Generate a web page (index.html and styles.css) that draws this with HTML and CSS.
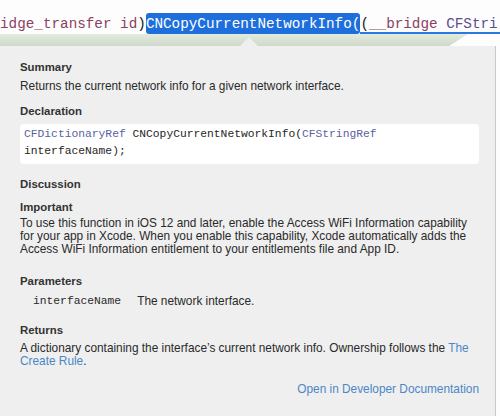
FILE: index.html
```html
<!DOCTYPE html>
<html>
<head>
<meta charset="utf-8">
<link rel="stylesheet" href="styles.css">
</head>
<body>
<div class="editor">
  <div class="codeline"><span class="kw">idge_transfer id</span><span class="pl">)</span><span class="sel">CNCopyCurrentNetworkInfo(</span><span class="rest"><span class="pl">(</span><span class="kw">__bridge</span> <span class="ty">CFStri</span></span></div>
  <div class="band"></div>
  <div class="popover">
    <svg class="arrow" width="20" height="10" viewBox="0 0 20 10"><path d="M0 10 L10 0 L20 10 Z" fill="#efefef"/></svg>
    <h3 class="h-summary">Summary</h3>
    <p class="p-summary">Returns the current network info for a given network interface.</p>
    <h3 class="h-decl">Declaration</h3>
    <pre class="decl"><span class="ty">CFDictionaryRef</span> CNCopyCurrentNetworkInfo(<span class="ty">CFStringRef</span>
interfaceName);</pre>
    <h3 class="h-disc">Discussion</h3>
    <h4 class="h-imp">Important</h4>
    <p class="p-imp">To use this function in iOS 12 and later, enable the Access WiFi Information capability for your app in Xcode. When you enable this capability, Xcode automatically adds the Access WiFi Information entitlement to your entitlements file and App ID.</p>
    <h3 class="h-params">Parameters</h3>
    <div class="param"><code>interfaceName</code><span>The network interface.</span></div>
    <h3 class="h-ret">Returns</h3>
    <p class="p-ret">A dictionary containing the interface’s current network info. Ownership follows the <a>The</a> <a>Create Rule</a>.</p>
    <div class="open"><a>Open in Developer Documentation</a></div>
  </div>
</div>
</body>
</html>
```
FILE: styles.css
```css
html, body { margin: 0; padding: 0; }
body {
  width: 500px;
  height: 416px;
  overflow: hidden;
  background: #fdfdfd;
  font-family: "Liberation Sans", Arial, sans-serif;
  color: #2a2a2a;
}
.editor { width: 500px; }
.codeline {
  height: 21px;
  margin-top: 13px;
  font-family: "Liberation Mono", "DejaVu Sans Mono", monospace;
  font-size: 14.3px;
  line-height: 22px;
  white-space: nowrap;
  overflow: hidden;
  display: flex;
}
.codeline .kw { color: #8a3f63; }
.codeline .pl { color: #1b1b1b; }
.codeline .ty { color: #5c4d8e; }
.codeline .sel {
  background: #1e6fdc;
  color: #ffffff;
  border-radius: 3px;
}
.codeline .rest {
  border-bottom: 2px solid #2a79de;
  flex: 1;
  height: 19px;
}
.band {
  height: 12px;
  width: 468px;
  background: linear-gradient(#e2ecdc, #cfd8cb);
  clip-path: polygon(0 0, 100% 0, 96% 100%, 0 100%);
}
.popover {
  position: relative;
  width: 496px;
  height: 370px;
  box-sizing: border-box;
  background: #efefef;
  border-right: 1px solid #c9c9c9;
  padding: 14px 16px 0 20px;
  font-size: 11.85px;
}
.arrow {
  position: absolute;
  left: 239px;
  top: -9px;
}
h3, h4 {
  margin: 0;
  font-size: 11.4px;
  font-weight: bold;
  color: #333;
  line-height: 14px;
}
p { margin: 0; line-height: 13px; }
.p-summary { margin-top: 6px; }
.h-decl { margin-top: 11px; }
.decl {
  margin: 6px 0 0 0;
  background: #ffffff;
  border-radius: 4px;
  padding: 2px 4px 4px 4px;
  font-family: "Liberation Mono", "DejaVu Sans Mono", monospace;
  font-size: 11.3px;
  line-height: 17px;
  color: #262626;
}
.decl .ty { color: #5c5fa0; }
.h-disc { margin-top: 13px; }
.h-imp { margin-top: 9px; }
.p-imp { margin-top: 3px; }
.h-params { margin-top: 18px; }
.param {
  margin-top: 6px;
  padding-left: 13px;
  display: flex;
  gap: 16px;
  line-height: 14px;
}
.param code {
  font-family: "Liberation Mono", "DejaVu Sans Mono", monospace;
  font-size: 11.3px;
}
.h-ret { margin-top: 15px; }
.p-ret { margin-top: 5px; }
a { color: #4a87c6; }
.open {
  display: flex;
  justify-content: flex-end;
  margin-top: 14px;
  line-height: 14px;
}
```
